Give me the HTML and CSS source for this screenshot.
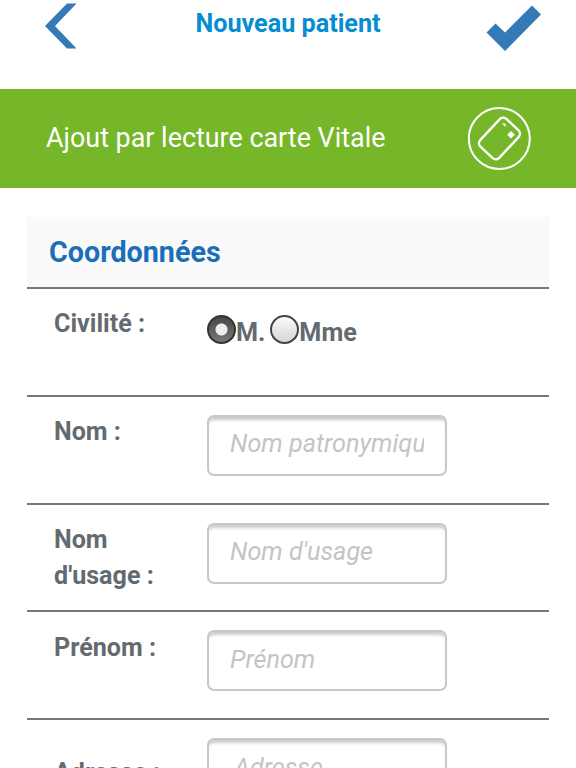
FILE: index.html
```html
<!DOCTYPE html>
<html lang="fr">
<head>
    <meta charset="UTF-8" />
    <meta name="viewport" content="width=device-width, initial-scale=1.0"/>
    <title>Nouveau patient</title>
    <link rel="stylesheet" href="styles.css">
</head>
<body>
<header class="topbar">
    <a class="back" href="#" aria-label="Retour">
        <svg width="32" height="46" viewBox="0 0 32 46"><path fill="#337ab7" d="M22 .5h9.500L10 23l21.500 22.500H22L0 23z"/></svg>
    </a>
    <h1>Nouveau patient</h1>
    <a class="valid" href="#" aria-label="Valider">
        <svg width="56" height="47" viewBox="0 0 56 47"><path fill="#337ab7" d="M.5 27.500 9.500 18.500 19 27.500 46 .5 55 9.500 19 46z"/></svg>
    </a>
</header>

<a class="vitale" href="#">
    <span>Ajout par lecture carte Vitale</span>
    <svg width="64" height="64" viewBox="0 0 64 64">
        <g fill="none" stroke="#fff" stroke-width="2">
            <circle cx="31.300" cy="31.500" r="30.500"/>
            <rect x="12.500" y="18.500" width="38" height="26" rx="5" stroke-width="2.400" transform="rotate(-47 31.500 31.500)"/>
        </g>
        <path fill="#fff" d="M43 24l3.800 3.800-3.800 3.800-3.800-3.800zM34 16.500h3.500v3.500z"/>
    </svg>
</a>

<form class="card">
    <h2>Coordonnées</h2>
    <div class="row">
        <span class="label">Civilité :</span>
        <div class="radios">
            <label><input type="radio" name="civilite" checked>M.</label>
            <label><input type="radio" name="civilite">Mme</label>
        </div>
    </div>
    <div class="row">
        <label class="label" for="nom">Nom :</label>
        <input class="field" type="text" id="nom" placeholder="Nom patronymique">
    </div>
    <div class="row">
        <label class="label" for="usage">Nom d'usage :</label>
        <input class="field" type="text" id="usage" placeholder="Nom d'usage">
    </div>
    <div class="row">
        <label class="label" for="prenom">Prénom :</label>
        <input class="field" type="text" id="prenom" placeholder="Prénom">
    </div>
    <div class="row row-adresse">
        <label class="label" for="adresse">Adresse :</label>
        <input class="field" type="text" id="adresse" placeholder="Adresse">
    </div>
</form>
</body>
</html>
```
FILE: styles.css
```css
* {
    box-sizing: border-box;
}
body {
    margin: 0;
    height: 768px;
    overflow: hidden;
    font-family: Roboto, "Liberation Sans", sans-serif;
    font-size: 25.1px;
    color: #636b70;
    background: #fff;
}
svg {
    display: block;
}
.topbar {
    display: flex;
    justify-content: space-between;
    height: 89px;
    padding: 3px 34px 0 45px;
}
.topbar h1 {
    margin: 6px 0 0 13px;
    font-size: 25.2px;
    line-height: 30px;
    color: #058dd2;
}
.valid {
    padding-top: 2px;
}
.vitale {
    display: flex;
    justify-content: space-between;
    height: 99px;
    padding: 18px 44px 0 46px;
    font-size: 26.9px;
    line-height: 62px;
    color: #fff;
    text-decoration: none;
    background: #76b729;
}
.card {
    width: 522px;
    margin: 29px 0 0 27px;
}
.card h2 {
    margin: 0;
    height: 70px;
    padding-left: 22px;
    font-size: 28.7px;
    line-height: 70px;
    color: #1a70b8;
    background: #fafafa;
}
.row {
    display: flex;
    height: 107.8px;
    border-top: 2px solid #70797e;
}
.label {
    width: 180px;
    padding: 17.4px 45px 0 27px;
    font-weight: bold;
    line-height: 36px;
}
.radios {
    display: flex;
    gap: 5px;
    padding-top: 25px;
    font-size: 25.2px;
    font-weight: bold;
    line-height: 38px;
}
.radios label {
    display: flex;
}
.radios input {
    appearance: none;
    width: 29px;
    height: 29px;
    margin: 1px 0 0;
    border: 2px solid #444;
    border-radius: 50%;
    background: linear-gradient(#fafafa, #d6d6d6);
}
.radios input:checked {
    border-color: #333;
    background: radial-gradient(circle, #eee 5.5px, transparent 6.5px), linear-gradient(#484848, #777);
}
.field {
    width: 240px;
    height: 61px;
    margin-top: 18px;
    padding: 0 21px 3px;
    border: 2px solid #c8c8c8;
    border-radius: 7px;
    font: 25.2px Roboto, "Liberation Sans", sans-serif;
    box-shadow: inset 0 5px 3px -2px #ccc;
}
.field::placeholder {
    font-style: italic;
    color: #c4c4c4;
}
.row-adresse .label {
    padding-top: 35px;
}
.row-adresse .field {
    padding-left: 25px;
}
```
